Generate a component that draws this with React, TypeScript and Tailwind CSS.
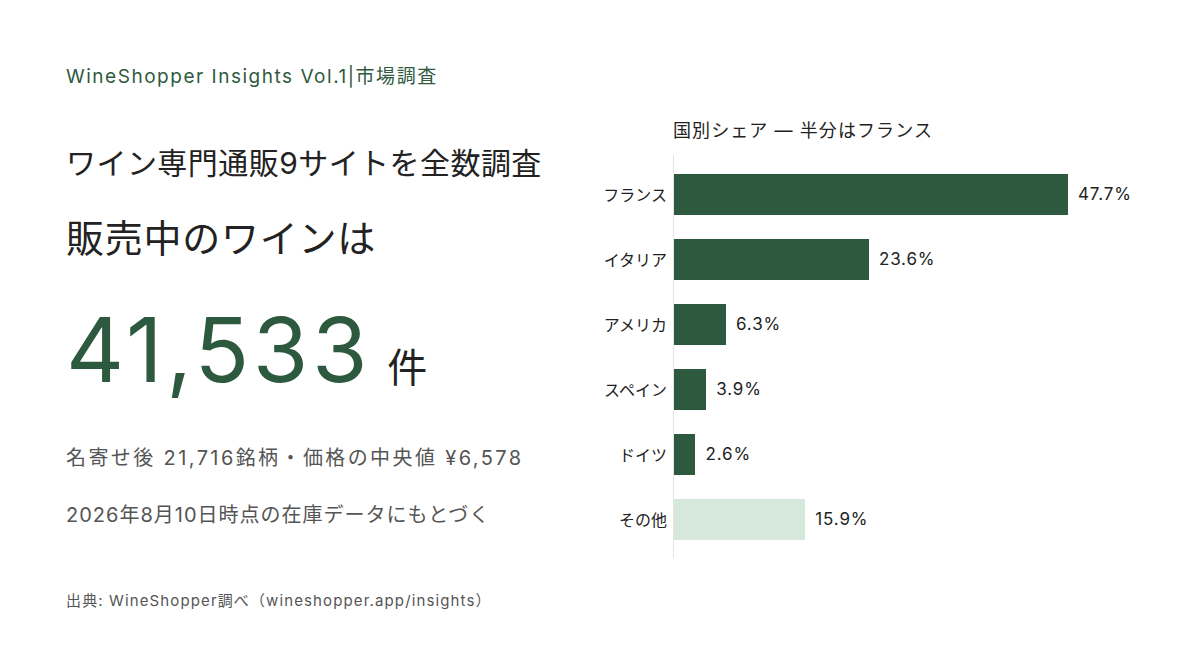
import React from "react";

const F = { fontFamily: 'Inter, "Noto Sans CJK JP", sans-serif' };

const data = [
  { name: "フランス", v: 47.7, light: false },
  { name: "イタリア", v: 23.6, light: false },
  { name: "アメリカ", v: 6.3, light: false },
  { name: "スペイン", v: 3.9, light: false },
  { name: "ドイツ", v: 2.6, light: false },
  { name: "その他", v: 15.9, light: true },
];

export default function App() {
  return (
    <div className="w-[1200px] h-[650px] bg-white flex overflow-hidden" style={F}>
      <div className="w-[520px] pl-[66px] pt-[63px] flex flex-col shrink-0">
        <div className="text-[19px] leading-[28px] tracking-[0.08em] text-[#2f5a3f] whitespace-nowrap">
          WineShopper Insights Vol.1|市場調査
        </div>
        <div className="mt-[52px] text-[30px] leading-[40px] tracking-[0.015em] text-[#222] whitespace-nowrap">
          ワイン専門通販9サイトを全数調査
        </div>
        <div className="mt-[30px] text-[38px] leading-[50px] tracking-[0.02em] text-[#222] whitespace-nowrap">
          販売中のワインは
        </div>
        <div className="mt-[42px] flex items-baseline whitespace-nowrap">
          <span className="text-[90px] leading-[90px] tracking-[0.04em] text-[#2d5a3e]">41,533</span>
          <span className="ml-[16px] text-[40px] text-[#222]">件</span>
        </div>
        <div className="mt-[45px] text-[20px] leading-[30px] tracking-[0.12em] text-[#555] whitespace-nowrap">
          名寄せ後 21,716銘柄・価格の中央値 ¥6,578
        </div>
        <div className="mt-[27px] text-[20px] leading-[30px] tracking-[0.05em] text-[#555] whitespace-nowrap">
          2026年8月10日時点の在庫データにもとづく
        </div>
        <div className="mt-[60px] text-[15px] leading-[22px] tracking-[0.075em] text-[#555] whitespace-nowrap">
          出典: WineShopper調べ（wineshopper.app/insights）
        </div>
      </div>
      <div className="pt-[117px] pl-[67px] flex flex-col">
        <div className="pl-[86px] text-[18px] leading-[28px] tracking-[0.06em] text-[#222] whitespace-nowrap">
          国別シェア ― 半分はフランス
        </div>
        <div className="mt-[10px] flex">
          <div className="w-[80px] pt-[7px] pb-[6px] flex flex-col">
            {data.map((d) => (
              <div key={d.name} className="h-[65px] flex items-center justify-end text-[16px] text-[#222] whitespace-nowrap">
                {d.name}
              </div>
            ))}
          </div>
          <div className="ml-[6px] border-l border-[#e3e3e3] pt-[7px] pb-[6px] flex flex-col w-[520px]">
            {data.map((d) => (
              <div key={d.name} className="h-[65px] flex items-center">
                <div
                  className={d.light ? "h-[41px] bg-[#d6e8dc]" : "h-[41px] bg-[#2d5a3e]"}
                  style={{ width: `${d.v * 8.26}px` }}
                />
                <span className="ml-[10px] text-[17px] tracking-[0.05em] text-[#222] whitespace-nowrap">{d.v.toFixed(1)}%</span>
              </div>
            ))}
          </div>
        </div>
      </div>
    </div>
  );
}
